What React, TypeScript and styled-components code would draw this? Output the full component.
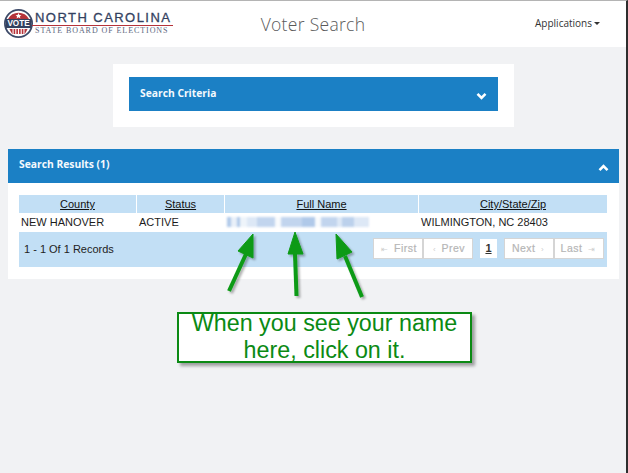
import styled, { createGlobalStyle } from "styled-components";

const GlobalStyle = createGlobalStyle`
  html, body {
    margin: 0;
    padding: 0;
    background: #f1f2f4;
    font-family: "Open Sans", "Liberation Sans", sans-serif;
  }
`;

const COLUMNS = [
  { label: "County", width: 117 },
  { label: "Status", width: 87 },
  { label: "Full Name", width: 193 },
  { label: "City/State/Zip", width: 188 },
];

const BLUR_BLOCKS = [
  [4, 0.7], [6, 0.2], [3, 0.7], [7, 0.15], [10, 0.3], [18, 0.55], [6, 0.05],
  [21, 0.55], [13, 0.7], [6, 0.05], [16, 0.55], [5, 0.3], [12, 0.6], [15, 0.3],
];

const PAGER_LEFT = [
  { icon: "⇤", label: "First" },
  { icon: "‹", label: "Prev" },
];

const Chevron = ({ up }: { up?: boolean }) => (
  <ChevronIcon width="11" height="8" viewBox="0 0 11 8">
    <path
      d={up ? "M1.5 6.2 5.5 2.2 9.5 6.2" : "M1.5 1.8 5.5 5.8 9.5 1.8"}
      fill="none"
      stroke="#fff"
      strokeWidth="2.6"
    />
  </ChevronIcon>
);

const Logo = () => (
  <LogoWrap>
    <svg width="29" height="29" viewBox="0 0 32 32">
      <circle cx="16" cy="16" r="15" fill="#fff" stroke="#3d4a68" strokeWidth="2" />
      <path d="M4.5 11a13 13 0 0 1 23 0z" fill="#b5333a" />
      <path d="M16 4.5l1 2.2 2.2.2-1.7 1.4.6 2.1-2.1-1.2-2.1 1.2.6-2.1-1.7-1.4 2.2-.2z" fill="#fff" />
      <rect x="2" y="11" width="28" height="10" fill="#33415f" />
      <path d="M6 22h20l-3 5.5H9z" fill="#b5333a" />
      <path d="M10 22v6M13 22v7M16 22v7M19 22v7M22 22v6" stroke="#fff" strokeWidth="1.2" />
      <text x="16" y="19" textAnchor="middle" fontSize="9" fontWeight="700" fill="#fff" fontFamily="Liberation Sans">
        VOTE
      </text>
    </svg>
    <LogoText>
      <LogoTitle>NORTH CAROLINA</LogoTitle>
      <LogoSub>STATE BOARD OF ELECTIONS</LogoSub>
    </LogoText>
  </LogoWrap>
);

const App = () => {
  return (
    <Page>
      <GlobalStyle />
      <Header>
        <Logo />
        <Title>Voter Search</Title>
        <AppMenu>
          Applications
          <Caret />
        </AppMenu>
      </Header>

      <CriteriaCard>
        <BlueBar>
          <CriteriaTitle>Search Criteria</CriteriaTitle>
          <Chevron />
        </BlueBar>
      </CriteriaCard>

      <ResultsCard>
        <ResultsBar>
          <BarTitle>Search Results (1)</BarTitle>
          <Chevron up />
        </ResultsBar>
        <TableArea>
          <HeadRow>
            {COLUMNS.map((c) => (
              <HeadCell key={c.label} $width={c.width}>
                {c.label}
              </HeadCell>
            ))}
          </HeadRow>
          <DataRow>
            <DataCell $width={117}>NEW HANOVER</DataCell>
            <DataCell $width={87}>ACTIVE</DataCell>
            <DataCell $width={193}>
              <BlurredName>
                {BLUR_BLOCKS.map(([w, o], i) => (
                  <BlurBlock key={i} $width={w} $opacity={o} />
                ))}
              </BlurredName>
            </DataCell>
            <DataCell $width={188}>WILMINGTON, NC 28403</DataCell>
          </DataRow>
          <FooterRow>
            <Records>1 - 1 Of 1 Records</Records>
            <Pager>
              <PagerGroup>
                {PAGER_LEFT.map((p) => (
                  <PagerButton key={p.label}>
                    <small>{p.icon}</small> {p.label}
                  </PagerButton>
                ))}
              </PagerGroup>
              <CurrentPage>1</CurrentPage>
              <PagerGroup>
                <PagerButton>
                  Next <small>›</small>
                </PagerButton>
                <PagerButton>
                  Last <small>⇥</small>
                </PagerButton>
              </PagerGroup>
            </Pager>
          </FooterRow>
        </TableArea>
      </ResultsCard>

      <Arrows width="628" height="473" viewBox="0 0 628 473">
        <defs>
          <filter id="sh" x="-30%" y="-30%" width="160%" height="160%">
            <feDropShadow dx="2" dy="2" stdDeviation="1.2" floodColor="#000" floodOpacity="0.3" />
          </filter>
        </defs>
        <g filter="url(#sh)" fill="#0b9a14" stroke="#0b9a14">
          <path d="M229 291 246 254" strokeWidth="4" />
          <path d="M253 234 238 251 253 258z" strokeWidth="1" />
          <path d="M296.5 296 295 254" strokeWidth="4" />
          <path d="M295 232 288 254 303 254z" strokeWidth="1" />
          <path d="M362 297 345 256" strokeWidth="4" />
          <path d="M336 234 337 259 352 252z" strokeWidth="1" />
        </g>
      </Arrows>
      <Callout>
        <CalloutText>
          When you see your name
          <br />
          here, click on it.
        </CalloutText>
      </Callout>
    </Page>
  );
};

const Page = styled.div`
  position: relative;
  width: 628px;
  height: 473px;
  overflow: hidden;
  background: #f1f2f4;
  border-top: 1px solid #b4b4b4;
  border-right: 2px solid #2e2e2e;
  box-sizing: border-box;
`;
const Header = styled.header`
  height: 46px;
  background: #fff;
  display: grid;
  grid-template-columns: 1fr auto 1fr;
  align-items: center;
`;
const LogoWrap = styled.div`
  display: flex;
  align-items: center;
  padding: 0 0 2px 4px;
`;
const LogoText = styled.div`
  display: flex;
  flex-direction: column;
  margin-left: -1px;
  width: 141px;
`;
const LogoTitle = styled.div`
  font-family: "Liberation Sans", sans-serif;
  font-size: 13px;
  line-height: 14px;
  letter-spacing: 1.45px;
  color: #33415f;
  padding-left: 3px;
  -webkit-text-stroke: 0.3px #33415f;
  white-space: nowrap;
  border-bottom: 1px solid #b5333a;
`;
const LogoSub = styled.div`
  font-family: "Liberation Serif", serif;
  font-size: 8px;
  line-height: 10px;
  letter-spacing: 0.93px;
  color: #5d6880;
  padding-left: 3px;
  white-space: nowrap;
`;
const Title = styled.h1`
  margin: 0;
  font-size: 17.5px;
  font-weight: 300;
  color: #5a5a5a;
  letter-spacing: 0.3px;
`;
const AppMenu = styled.div`
  justify-self: end;
  display: flex;
  align-items: center;
  gap: 2px;
  margin: 0 26px 3px 0;
  font-size: 10px;
  color: #333;
`;
const Caret = styled.span`
  width: 0;
  height: 0;
  margin-top: 2px;
  border-left: 3px solid transparent;
  border-right: 3px solid transparent;
  border-top: 3px solid #333;
`;
const CriteriaCard = styled.section`
  width: 369px;
  margin: 17px 0 0 113px;
  padding: 13px 16px 16px;
  background: #fff;
`;
const BlueBar = styled.div`
  height: 34px;
  padding: 0 11px;
  background: #1b80c5;
  display: flex;
  align-items: center;
  justify-content: space-between;
  box-sizing: border-box;
`;
const ResultsBar = styled(BlueBar)`
  padding-right: 10px;
`;
const BarTitle = styled.div`
  font-size: 10.3px;
  font-weight: 700;
  color: #f4f9fd;
  margin-top: -4px;
`;
const CriteriaTitle = styled(BarTitle)`
  margin-top: -2px;
`;
const ChevronIcon = styled.svg`
  display: block;
  margin-top: 4px;
`;
const ResultsCard = styled.section`
  width: 611px;
  margin: 22px 0 0 8px;
  background: #fff;
  padding-bottom: 12px;
`;
const TableArea = styled.div`
  margin: 12px 12px 0 11px;
  font-family: "Liberation Sans", sans-serif;
  font-size: 11px;
  color: #111;
`;
const HeadRow = styled.div`
  display: flex;
  height: 18px;
  gap: 1px;
  background: #fff;
`;
const HeadCell = styled.div<{ $width: number }>`
  width: ${(p) => p.$width}px;
  background: #c2dff5;
  text-align: center;
  text-decoration: underline;
  line-height: 18px;
`;
const DataRow = styled.div`
  display: flex;
  height: 19px;
  gap: 1px;
  align-items: center;
  padding-bottom: 1px;
  box-sizing: border-box;
  color: #1c1c1c;
`;
const DataCell = styled.div<{ $width: number }>`
  width: ${(p) => p.$width}px;
  padding-left: 2px;
  box-sizing: border-box;
  white-space: nowrap;
`;
const BlurredName = styled.div`
  display: flex;
  height: 10px;
  filter: blur(1px);
`;
const BlurBlock = styled.span<{ $width: number; $opacity: number }>`
  flex: none;
  width: ${(p) => p.$width}px;
  background: #8fb2e0;
  opacity: ${(p) => p.$opacity};
`;
const FooterRow = styled.div`
  height: 35px;
  padding: 0 3px 2px 5px;
  box-sizing: border-box;
  background: #c2dff5;
  display: flex;
  align-items: center;
  justify-content: space-between;
`;
const Records = styled.div`
  color: #222;
`;
const Pager = styled.div`
  display: flex;
  gap: 7px;
`;
const PagerGroup = styled.div`
  display: flex;
`;
const PagerButton = styled.div`
  height: 21px;
  width: 50px;
  box-sizing: border-box;
  background: #fff;
  border: 1px solid #d5d5d5;
  color: #b6b6b6;
  font-size: 10.5px;
  letter-spacing: 0.5px;
  -webkit-text-stroke: 0.2px #b6b6b6;
  line-height: 18px;
  white-space: nowrap;
  text-align: center;
  small {
    font-size: 8px;
    padding: 0 2px;
    color: #cfcfcf;
    -webkit-text-stroke: 0;
  }
`;
const CurrentPage = styled.div`
  width: 17px;
  height: 19px;
  margin-top: 1px;
  background: #fff;
  color: #333;
  font-weight: 700;
  line-height: 19px;
  text-align: center;
  text-decoration: underline;
`;
const Arrows = styled.svg`
  position: absolute;
  left: 0;
  top: -1px;
  pointer-events: none;
`;
const Callout = styled.div`
  position: absolute;
  left: 177px;
  top: 311px;
  width: 295px;
  height: 51px;
  box-sizing: border-box;
  border: 2px solid #0b8a14;
  background: #fff;
  box-shadow: 3px 3px 3px rgba(0, 0, 0, 0.35);
`;
const CalloutText = styled.div`
  margin-top: -4px;
  color: #0b8a14;
  font-family: "Liberation Sans", sans-serif;
  font-size: 23.3px;
  line-height: 26.5px;
  text-align: center;
  white-space: nowrap;
`;

export default App;
